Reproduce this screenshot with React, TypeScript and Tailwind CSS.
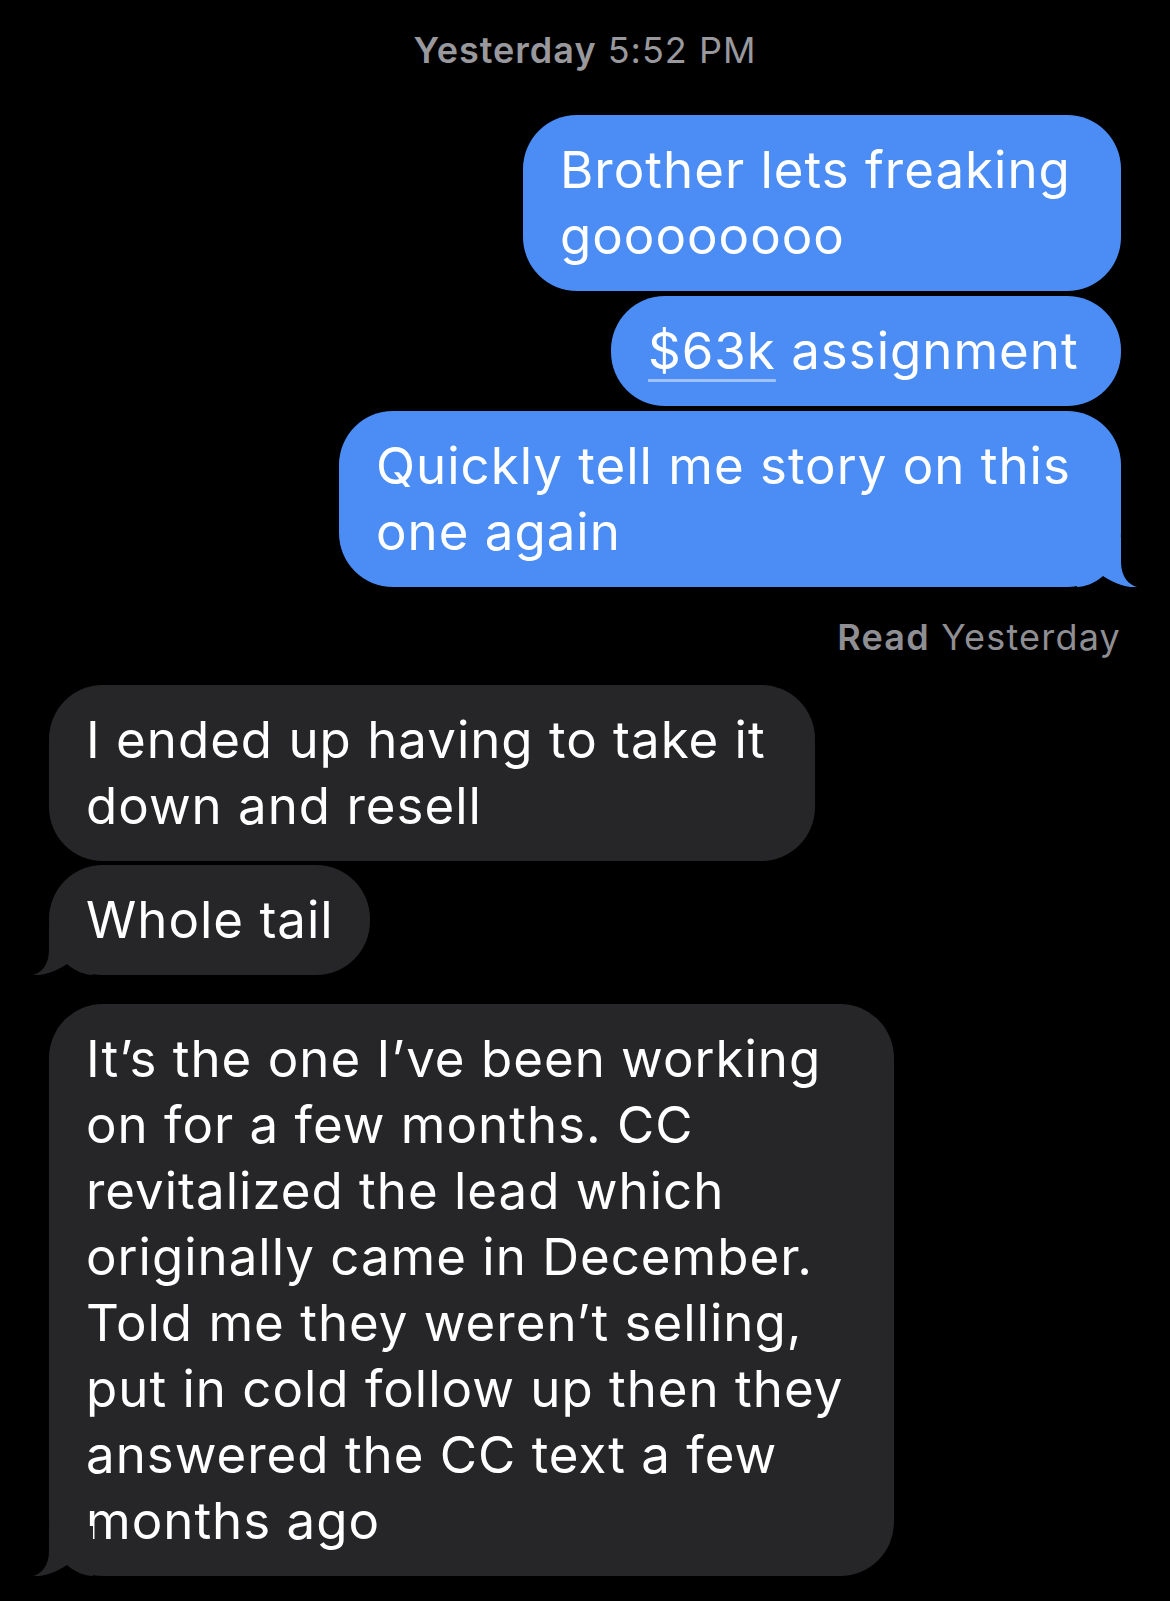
import React from 'react';

const font = { fontFamily: 'Inter, "Noto Sans", sans-serif' };

function TailRight() {
  return (
    <svg
      className="absolute bottom-0 right-[-16px]"
      width="60"
      height="50"
      viewBox="0 0 60 50"
    >
      <path
        d="M0 0 L44 0 L44 25 C44 40 52 48 60 50 C50 51 38 47 26 39 C18 46 8 50 0 50 Z"
        fill="#4b8df4"
      />
    </svg>
  );
}

function TailLeft() {
  return (
    <svg
      className="absolute bottom-0 left-[-16px]"
      width="60"
      height="50"
      viewBox="0 0 60 50"
    >
      <path
        d="M60 0 L16 0 L16 25 C16 40 8 48 0 50 C10 51 22 47 34 39 C42 46 52 50 60 50 Z"
        fill="#262628"
      />
    </svg>
  );
}

interface BubbleProps {
  lines: React.ReactNode[];
  width: string;
  mine?: boolean;
  tail?: boolean;
}

function Bubble({ lines, width, mine, tail }: BubbleProps) {
  return (
    <div
      className={`relative rounded-[54px] px-[37px] py-[22px] text-[51px] leading-[66px] text-white tracking-[1px] ${width} ${
        mine ? 'bg-[#4b8df4]' : 'bg-[#262628]'
      }`}
    >
      {lines.map((line, i) => (
        <div key={i} className="whitespace-nowrap">
          {line}
        </div>
      ))}
      {tail && (mine ? <TailRight /> : <TailLeft />)}
    </div>
  );
}

export default function App() {
  return (
    <div className="min-h-screen bg-black" style={font}>
      <div className="flex flex-col px-[49px] pt-[28px] pb-[24px]">
        <div className="text-center text-[36px] leading-[44px] tracking-[1px] text-[#98989d]">
          <span className="font-semibold">Yesterday</span> 5:52 PM
        </div>

        <div className="mt-[43px] flex flex-col items-end gap-[5px]">
          <Bubble mine width="w-[598px]" lines={['Brother lets freaking', 'goooooooo']} />
          <Bubble
            mine
            width="w-[510px]"
            lines={[
              <>
                <span className="underline decoration-[#9fc2f9] decoration-[3px] underline-offset-[10px]">
                  $63k
                </span>{' '}
                assignment
              </>,
            ]}
          />
          <Bubble
            mine
            tail
            width="w-[782px]"
            lines={['Quickly tell me story on this', 'one again']}
          />
        </div>

        <div className="mt-[28px] text-right text-[36px] leading-[44px] tracking-[1.2px] text-[#8e8e93]">
          <span className="font-semibold">Read</span> Yesterday
        </div>

        <div className="mt-[26px] flex flex-col items-start gap-[4px]">
          <Bubble width="w-[766px]" lines={['I ended up having to take it', 'down and resell']} />
          <Bubble tail width="w-[321px]" lines={['Whole tail']} />
        </div>

        <div className="mt-[29px] flex flex-col items-start">
          <Bubble
            tail
            width="w-[845px]"
            lines={[
              'It’s the one I’ve been working',
              'on for a few months. CC',
              'revitalized the lead which',
              'originally came in December.',
              'Told me they weren’t selling,',
              'put in cold follow up then they',
              'answered the CC text a few',
              'months ago',
            ]}
          />
        </div>
      </div>
    </div>
  );
}
